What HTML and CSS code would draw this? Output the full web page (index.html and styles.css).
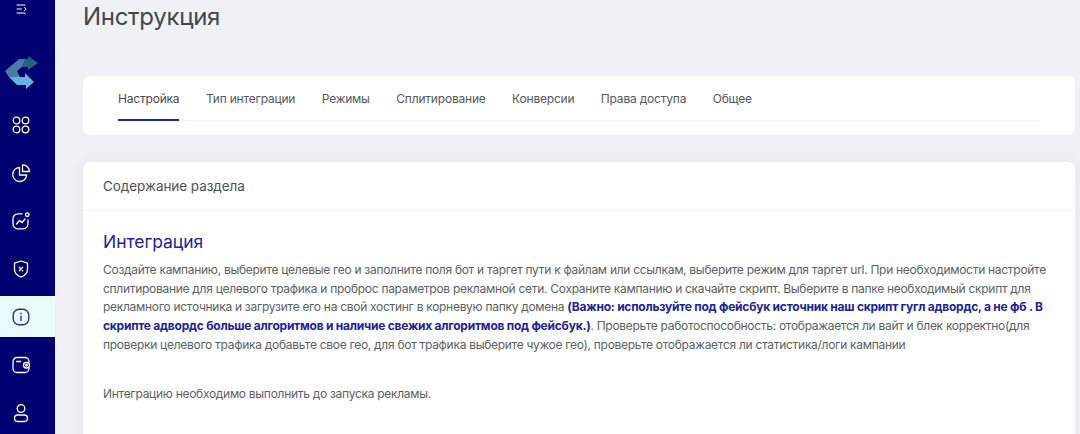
FILE: index.html
```html
<!DOCTYPE html>
<html lang="ru">
<head>
<meta charset="utf-8">
<title>Инструкция</title>
<link rel="stylesheet" href="styles.css">
</head>
<body>
<div class="app">
  <aside class="sidebar">
    <div class="toggle">
      <svg width="12" height="12" viewBox="0 0 12 12" fill="none" stroke="#fff" stroke-width="1" stroke-linecap="round" stroke-linejoin="round"><path d="M1 2h8M1 6h4.500M1 10h8M8.500 4.500l1.500 1.500-1.500 1.500"/></svg>
    </div>
    <div class="logo">
      <svg width="34" height="36" viewBox="5 55 34 36"><path d="M24 59h4v-3l10 7-10 7v-3h-6z" fill="#2a5f84"/><path d="M5 71L19 59h6l-3 8-5 4 3 6H9z" fill="#44809f"/><path d="M9 77h16v-4l9 9-8 7v-4h-9z" fill="#62b3de"/></svg>
    </div>
    <nav class="menu">
      <a class="item"><svg width="20" height="20" viewBox="0 0 20 20" fill="none" stroke="#fff" stroke-width="1.300"><circle cx="5.500" cy="5.500" r="3.300"/><circle cx="14.500" cy="5.500" r="3.300"/><circle cx="5.500" cy="14.500" r="3.300"/><circle cx="14.500" cy="14.500" r="3.300"/></svg></a>
      <a class="item"><svg width="20" height="20" viewBox="0 0 20 20" fill="none" stroke="#fff" stroke-width="1.300" stroke-linejoin="round"><path d="M8.500 4.500a7 7 0 1 0 7.200 7.500H8.500z"/><path d="M11.500 1.800a6.500 6.500 0 0 1 6.800 6.700h-6.800z"/></svg></a>
      <a class="item"><svg width="20" height="20" viewBox="0 0 20 20" fill="none" stroke="#fff" stroke-width="1.300" stroke-linecap="round" stroke-linejoin="round"><path d="M11 2.800H7a5 5 0 0 0-5 5v5a5 5 0 0 0 5 5h5a5 5 0 0 0 5-5V9"/><circle cx="16.300" cy="3.700" r="1.800"/><path d="M5.500 13l3-3.500 2.500 2 3-3.500"/></svg></a>
      <a class="item"><svg width="20" height="20" viewBox="0 0 20 20" fill="none" stroke="#fff" stroke-width="1.300" stroke-linecap="round" stroke-linejoin="round"><path d="M10 2l6.500 2.200v6c0 4-3 6.500-6.500 7.800-3.500-1.300-6.500-3.800-6.500-7.800v-6z"/><path d="M8.300 8.300l3.400 3.400M11.700 8.300l-3.400 3.400"/></svg></a>
      <a class="item active"><svg width="20" height="20" viewBox="0 0 20 20" fill="none" stroke="#2a2fa8" stroke-width="1.400" stroke-linecap="round"><rect x="2.200" y="2.200" width="15.600" height="15.600" rx="6"/><path d="M10 9.300v4.200M10 6.300v.4"/></svg></a>
      <a class="item"><svg width="20" height="20" viewBox="0 0 20 20" fill="none" stroke="#fff" stroke-width="1.300" stroke-linecap="round"><path d="M18 7V6.500a4 4 0 0 0-4-4H6a4 4 0 0 0-4 4v7a4 4 0 0 0 4 4h8a4 4 0 0 0 4-4V13"/><rect x="12.500" y="7.500" width="6" height="5.500" rx="2.700"/><circle cx="15.500" cy="10.200" r=".8"/><path d="M5.500 6.500h4"/></svg></a>
      <a class="item"><svg width="20" height="20" viewBox="0 0 20 20" fill="none" stroke="#fff" stroke-width="1.300"><circle cx="10" cy="5.500" r="3.800"/><rect x="3.500" y="12" width="13" height="6.500" rx="3.200"/></svg></a>
    </nav>
  </aside>
  <main class="content">
    <h1 class="title">Инструкция</h1>
    <section class="card tabs-card">
      <ul class="tabs">
        <li class="tab current">Настройка</li>
        <li class="tab">Тип интеграции</li>
        <li class="tab">Режимы</li>
        <li class="tab">Сплитирование</li>
        <li class="tab">Конверсии</li>
        <li class="tab">Права доступа</li>
        <li class="tab">Общее</li>
      </ul>
    </section>
    <section class="card doc-card">
      <header class="doc-head">Содержание раздела</header>
      <div class="doc-body">
        <h2 class="doc-title">Интеграция</h2>
        <p class="doc-text">Создайте кампанию, выберите целевые гео и заполните поля бот и таргет пути к файлам или ссылкам, выберите режим для таргет url. При необходимости настройте сплитирование для целевого трафика и проброс параметров рекламной сети. Сохраните кампанию и скачайте скрипт. Выберите в папке необходимый скрипт для рекламного источника и загрузите его на свой хостинг в корневую папку домена <strong class="accent">(Важно: используйте под фейсбук источник наш скрипт гугл адвордс, а не фб . В скрипте адвордс больше алгоритмов и наличие свежих алгоритмов под фейсбук.)</strong>. Проверьте работоспособность: отображается ли вайт и блек корректно(для проверки целевого трафика добавьте свое гео, для бот трафика выберите чужое гео), проверьте отображается ли статистика/логи кампании</p>
        <p class="doc-text second">Интеграцию необходимо выполнить до запуска рекламы.</p>
      </div>
    </section>
  </main>
</div>
</body>
</html>
```

FILE: styles.css
```css
* { box-sizing: border-box; }
html, body { margin: 0; height: 100%; overflow: hidden; }
body { background: #f0f1f6; font-family: Inter, "Noto Sans", sans-serif; color: #4a4f55; }
.app { display: flex; height: 434px; overflow: hidden; }
.sidebar { width: 55px; flex: none; background: #000070; display: flex; flex-direction: column; }
.toggle { flex: none; height: 24px; display: flex; padding: 3px 0 0 16px; }
.logo { flex: none; height: 51px; margin-top: 26px; display: flex; padding: 5px 0 0 5px; }
.menu { flex: none; display: flex; flex-direction: column; }
.item { flex: none; height: 48px; display: flex; align-items: center; justify-content: center; padding-right: 13px; }
.item.active { height: 41px; margin: 3px 0 4px; background: #e9fbfb; }
.content { flex: 1; padding: 0 5px 0 28px; min-width: 0; }
.title { margin: 0; height: 76px; font-size: 24px; line-height: 34px; font-weight: 400; letter-spacing: -0.3px; color: #41474c; }
.card { background: #fff; border-radius: 7px; }
.tabs-card { height: 59px; padding: 0 35px; margin-bottom: 27px; }
.tabs { display: flex; gap: 26.500px; list-style: none; margin: 0; padding: 0; height: 45px; border-bottom: 1px solid #f1f2f5; }
.tab { font-size: 12px; letter-spacing: -0.2px; line-height: 46px; height: 45px; color: #53585e; }
.tab.current { color: #44494f; border-bottom: 2px solid #1a23a0; }
.doc-card { box-shadow: 0 0 16px rgba(60, 70, 110, .07); height: 320px; }
.doc-head { height: 49px; padding: 0 20px; font-size: 13.500px; letter-spacing: -0.05px; line-height: 48px; border-bottom: 1px solid #f4f5f7; color: #4c5157; }
.doc-body { padding: 19px 20px 0; }
.doc-title { margin: 0 0 8px; font-size: 17.500px; letter-spacing: -0.05px; line-height: 23px; font-weight: 400; color: #1a23a0; }
.doc-text { margin: 0; font-size: 12px; letter-spacing: -0.29px; line-height: 18.670px; color: #5a5f65; }
.doc-text.second { margin-top: 31px; }
.accent { color: #1a23a0; font-weight: 700; letter-spacing: -0.24px; }
```
